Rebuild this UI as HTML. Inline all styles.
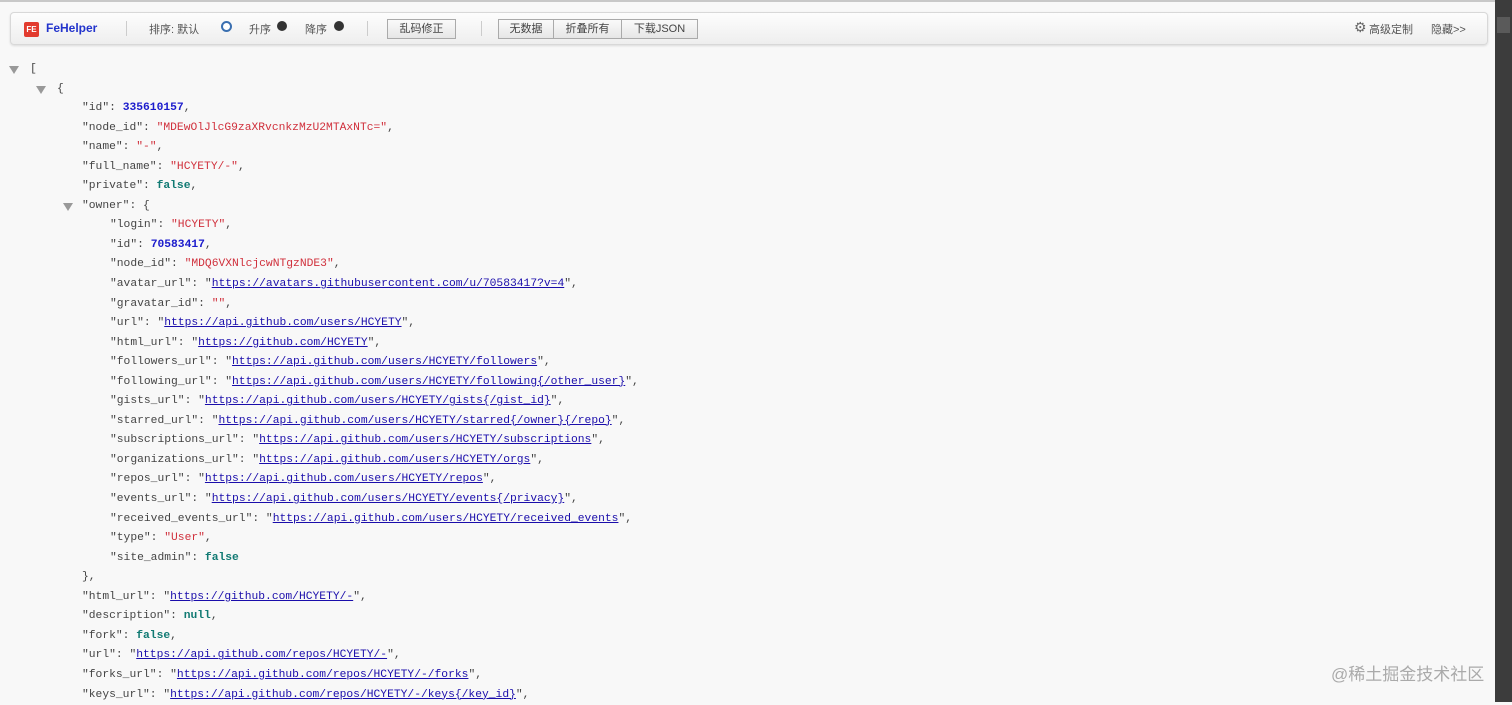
<!DOCTYPE html>
<html><head><meta charset="utf-8"><style>
html,body{margin:0;padding:0;width:1512px;height:702px;overflow:hidden;background:#f8f8f8;font-family:"Liberation Mono","Noto Sans CJK SC",monospace;}
.topline{position:absolute;left:0;top:0;width:1495px;height:2px;background:#c8c8c8}
.bar{position:absolute;left:10px;top:12px;width:1476px;height:31px;border:1px solid #d8d8d8;border-radius:4px;background:linear-gradient(#fdfdfd,#eeeeee);box-shadow:0 1px 2px rgba(0,0,0,.12);font-size:11px;color:#555;font-family:"Liberation Sans","Noto Sans CJK SC",sans-serif}
.bar span,.bar div{position:absolute}
.logo{left:13px;top:9px;width:15px;height:15px;background:#e23b2e;border-radius:2px;color:#fff;font-size:8px;font-weight:bold;line-height:15px;text-align:center}
.btn{top:6px;height:18px;border:1px solid #aaa;background:linear-gradient(#fafafa,#e6e6e6);line-height:18px;text-align:center;font-size:11px;color:#444}
.sep{top:8px;width:1px;height:15px;background:#ccc}
.dot{width:10px;height:10px;border-radius:50%;background:#333;top:8px}
.scroll{position:absolute;left:1495px;top:0;width:17px;height:702px;background:#3c3c3c}
.thumb{position:absolute;left:1497px;top:17px;width:13px;height:16px;background:#5a5a5a}
#j{position:absolute;left:0;top:60px;font-size:11.3px;line-height:19.56px;color:#444;white-space:nowrap}
.l{position:relative;height:19.56px}
.s{color:#d0303c}.n{color:#1a1acc;font-weight:bold}.b{color:#117a73;font-weight:bold}
a{color:#1a0dab;text-decoration:underline}
.t{position:absolute;width:0;height:0;border-left:5px solid transparent;border-right:5px solid transparent;border-top:8px solid #999;top:6px}
.wm{position:absolute;left:1331px;top:660px;font-size:17px;color:#aaa;font-family:"Liberation Sans","Noto Sans CJK SC",sans-serif}
</style></head><body>
<div class="topline"></div>
<div class="bar">
<div class="logo">FE</div>
<span style="left:35px;top:8px;color:#2233cc;font-weight:bold;font-size:12px">FeHelper</span>
<div class="sep" style="left:115px"></div>
<span style="left:138px;top:8px">排序: 默认</span>
<div class="dot" style="left:210px;background:#fff;border:2px solid #3a6fb0;width:7px;height:7px"></div>
<span style="left:238px;top:8px">升序</span><div class="dot" style="left:266px"></div>
<span style="left:294px;top:8px">降序</span><div class="dot" style="left:323px"></div>
<div class="sep" style="left:356px"></div>
<div class="btn" style="left:376px;width:67px">乱码修正</div>
<div class="sep" style="left:470px"></div>
<div class="btn" style="left:487px;width:54px">无数据</div>
<div class="btn" style="left:542px;width:67px">折叠所有</div>
<div class="btn" style="left:610px;width:75px">下载JSON</div>
<span style="left:1343px;top:6px;font-size:14px;color:#666">⚙</span>
<span style="left:1358px;top:8px">高级定制</span>
<span style="left:1420px;top:8px">隐藏&gt;&gt;</span>
</div>
<div class="scroll"></div><div class="thumb"></div>
<div id="j">
<div class="l"><i class="t" style="left:9px"></i><span style="position:absolute;left:30px">[</span></div>
<div class="l"><i class="t" style="left:36px"></i><span style="position:absolute;left:57px">{</span></div>
<div class="l" style="padding-left:82px">"id": <span class="n">335610157</span>,</div>
<div class="l" style="padding-left:82px">"node_id": <span class="s">"MDEwOlJlcG9zaXRvcnkzMzU2MTAxNTc="</span>,</div>
<div class="l" style="padding-left:82px">"name": <span class="s">"-"</span>,</div>
<div class="l" style="padding-left:82px">"full_name": <span class="s">"HCYETY/-"</span>,</div>
<div class="l" style="padding-left:82px">"private": <span class="b">false</span>,</div>
<div class="l" style="padding-left:82px"><i class="t" style="left:63px"></i>"owner": {</div>
<div class="l" style="padding-left:110px">"login": <span class="s">"HCYETY"</span>,</div>
<div class="l" style="padding-left:110px">"id": <span class="n">70583417</span>,</div>
<div class="l" style="padding-left:110px">"node_id": <span class="s">"MDQ6VXNlcjcwNTgzNDE3"</span>,</div>
<div class="l" style="padding-left:110px">"avatar_url": "<a>https://avatars.githubusercontent.com/u/70583417?v=4</a>",</div>
<div class="l" style="padding-left:110px">"gravatar_id": <span class="s">""</span>,</div>
<div class="l" style="padding-left:110px">"url": "<a>https://api.github.com/users/HCYETY</a>",</div>
<div class="l" style="padding-left:110px">"html_url": "<a>https://github.com/HCYETY</a>",</div>
<div class="l" style="padding-left:110px">"followers_url": "<a>https://api.github.com/users/HCYETY/followers</a>",</div>
<div class="l" style="padding-left:110px">"following_url": "<a>https://api.github.com/users/HCYETY/following{/other_user}</a>",</div>
<div class="l" style="padding-left:110px">"gists_url": "<a>https://api.github.com/users/HCYETY/gists{/gist_id}</a>",</div>
<div class="l" style="padding-left:110px">"starred_url": "<a>https://api.github.com/users/HCYETY/starred{/owner}{/repo}</a>",</div>
<div class="l" style="padding-left:110px">"subscriptions_url": "<a>https://api.github.com/users/HCYETY/subscriptions</a>",</div>
<div class="l" style="padding-left:110px">"organizations_url": "<a>https://api.github.com/users/HCYETY/orgs</a>",</div>
<div class="l" style="padding-left:110px">"repos_url": "<a>https://api.github.com/users/HCYETY/repos</a>",</div>
<div class="l" style="padding-left:110px">"events_url": "<a>https://api.github.com/users/HCYETY/events{/privacy}</a>",</div>
<div class="l" style="padding-left:110px">"received_events_url": "<a>https://api.github.com/users/HCYETY/received_events</a>",</div>
<div class="l" style="padding-left:110px">"type": <span class="s">"User"</span>,</div>
<div class="l" style="padding-left:110px">"site_admin": <span class="b">false</span></div>
<div class="l" style="padding-left:82px">},</div>
<div class="l" style="padding-left:82px">"html_url": "<a>https://github.com/HCYETY/-</a>",</div>
<div class="l" style="padding-left:82px">"description": <span class="b">null</span>,</div>
<div class="l" style="padding-left:82px">"fork": <span class="b">false</span>,</div>
<div class="l" style="padding-left:82px">"url": "<a>https://api.github.com/repos/HCYETY/-</a>",</div>
<div class="l" style="padding-left:82px">"forks_url": "<a>https://api.github.com/repos/HCYETY/-/forks</a>",</div>
<div class="l" style="padding-left:82px">"keys_url": "<a>https://api.github.com/repos/HCYETY/-/keys{/key_id}</a>",</div>
</div>
<div class="wm">@稀土掘金技术社区</div>
</body></html>
